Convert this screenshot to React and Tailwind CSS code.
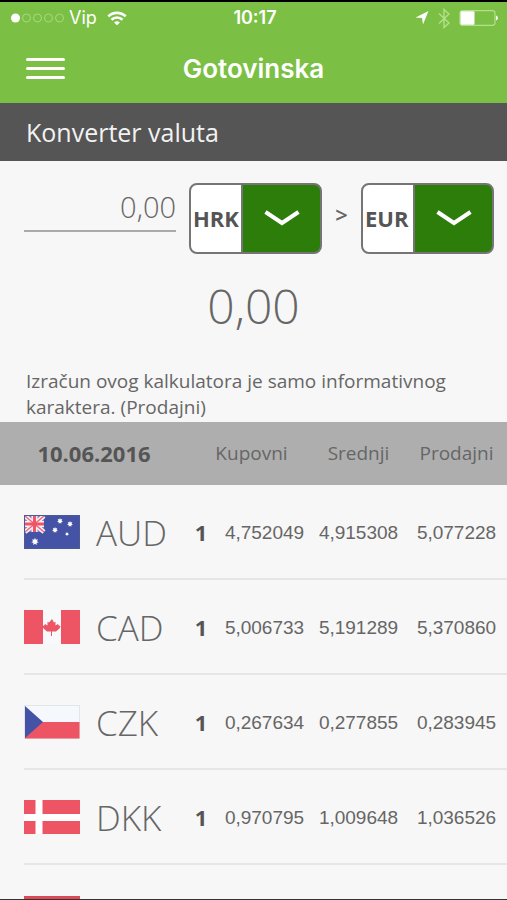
import { useState } from "react";

const rates = [
  { code: "AUD", unit: "1", buy: "4,752049", mid: "4,915308", sell: "5,077228" },
  { code: "CAD", unit: "1", buy: "5,006733", mid: "5,191289", sell: "5,370860" },
  { code: "CZK", unit: "1", buy: "0,267634", mid: "0,277855", sell: "0,283945" },
  { code: "DKK", unit: "1", buy: "0,970795", mid: "1,009648", sell: "1,036526" },
];

const star =
  "M0-3 .7-1.4 2.3-1.9 1.6-.3 3 .7 1.3 1 1.3 2.7 0 1.7-1.3 2.7-1.3 1-3 .7-1.6-.3-2.3-1.9-.7-1.4Z";

function Flag({ code }) {
  return (
    <svg className="h-[34px] w-14 shrink-0" viewBox="0 0 56 34" aria-hidden="true">
      {code === "AUD" && (
        <g>
          <rect width="56" height="34" fill="#4453a6" />
          <rect x="1" y="1" width="19" height="16" fill="#7d84c0" />
          <path d="M1 1 20 17M20 1 1 17" stroke="#f8eef4" strokeWidth="4.5" />
          <path d="M10.5 1v16M1 9h19" stroke="#f8eef4" strokeWidth="6" />
          <path d="M1 1 20 17M20 1 1 17" stroke="#ee6b79" strokeWidth="1.6" />
          <path d="M10.5 1v16M1 9h19" stroke="#ee5566" strokeWidth="3" />
          <g fill="#fff">
            <path d={star} transform="translate(11 26.5) scale(1.25)" />
            <path d={star} transform="translate(36 6)" />
            <path d={star} transform="translate(46 9)" />
            <path d={star} transform="translate(31 15)" />
            <path d={star} transform="translate(43 19) scale(.65)" />
          </g>
          <rect x=".5" y=".5" width="55" height="33" fill="none" stroke="#4e5a92" />
        </g>
      )}
      {code === "CAD" && (
        <g>
          <rect width="56" height="34" fill="#f8f9fb" />
          <path d="M0 0h19v34H0ZM37 0h19v34H37Z" fill="#ed5565" />
          <path
            d="M28 9l2 3.5 1.500-.8v3.800l2.500-1.500.8 1.500 1.700.5-1 2.500-3.500 3-4-.1V26h-1v-4.600l-4 .1-3.500-3-1-2.500 1.700-.5.8-1.500 2.500 1.500v-3.800l1.500.8Z"
            fill="#ed5565"
          />
        </g>
      )}
      {code === "CZK" && (
        <g>
          <rect x=".5" y=".5" width="55" height="33" fill="#f5f8fd" stroke="#e3e5e8" />
          <path d="M1 17h54.5v16.5H1Z" fill="#ed5565" />
          <path d="M1 1 19 17 1 33Z" fill="#4453a6" />
        </g>
      )}
      {code === "DKK" && (
        <g>
          <rect width="56" height="34" fill="#ed5565" />
          <path d="M15 0v34M0 17.5h56" stroke="#fff" strokeWidth="7" />
        </g>
      )}
      {code === "HUF" && (
        <g>
          <rect width="56" height="34" fill="#f8f9fb" />
          <path d="M0 0h56v11H0Z" fill="#dc4a58" />
          <path d="M0 23h56v11H0Z" fill="#5a9e5a" />
        </g>
      )}
    </svg>
  );
}

function StatusBar() {
  return (
    <div className="grid grid-cols-3 items-center pr-2 pl-[11px] font-['Inter',sans-serif] text-[18px] leading-8">
      <div className="flex items-center">
        <svg className="h-[10px] w-[54px]" viewBox="0 0 54 10" aria-hidden="true">
          <circle cx="4.5" cy="5" r="4.5" fill="#fff" />
          <g fill="none" stroke="#a9d982" strokeWidth="1">
            <circle cx="15.5" cy="5" r="4" />
            <circle cx="26.5" cy="5" r="4" />
            <circle cx="37.5" cy="5" r="4" />
            <circle cx="48.5" cy="5" r="4" />
          </g>
        </svg>
        <span className="ml-1">Vip</span>
        <svg className="ml-[10px] h-[15px] w-5" viewBox="0 0 20 15" fill="none" stroke="#fff" strokeWidth="2.6" aria-hidden="true">
          <path d="M1.3 5.4a12.4 12.4 0 0 1 17.4 0" />
          <path d="M4.5 8.8a7.9 7.9 0 0 1 11 0" />
          <path d="M10 14.300 7 11.600a4.300 4.300 0 0 1 6 0Z" fill="#fff" stroke="none" />
        </svg>
      </div>
      <div className="text-center font-semibold">10:17</div>
      <div className="flex items-center justify-end">
        <svg className="h-[14px] w-[14px]" viewBox="0 0 14 14" aria-hidden="true">
          <path d="M13.500 0 8 13.500 7 7 .5 6.400Z" fill="#fff" />
        </svg>
        <svg className="ml-[9px] h-[21px] w-3" viewBox="0 0 12 21" fill="none" stroke="#b5e08a" strokeWidth="1.4" aria-hidden="true">
          <path d="M1 5.500 11 15l-5 4.500v-18L11 6 1 15.500" />
        </svg>
        <svg className="ml-[9px] h-4 w-10" viewBox="0 0 40 16" aria-hidden="true">
          <rect x="1" y=".7" width="35" height="14.6" rx="2.5" fill="none" stroke="#b5e08a" strokeWidth="1.2" />
          <rect x="1.5" y="1.2" width="14" height="13.6" rx="1" fill="#fff" />
          <path d="M37 5.500c2.500.8 2.500 4.200 0 5Z" fill="#fff" />
        </svg>
      </div>
    </div>
  );
}

function CurrencySelect({ label, value, onChange }) {
  return (
    <div className="relative">
      <select
        aria-label={label}
        value={value}
        onChange={(e) => onChange(e.target.value)}
        className="block h-[71px] w-[133px] appearance-none rounded-lg border-2 border-[#757575] bg-[linear-gradient(to_right,#fff_50px,#757575_50px,#757575_52px,#2d7d0a_52px)] pl-[2px] text-[22px] font-bold text-[#555]"
      >
        <option>HRK</option>
        <option>EUR</option>
      </select>
      <svg
        className="pointer-events-none absolute top-[27px] right-[22px] h-4 w-9"
        viewBox="0 0 36 16"
        fill="none"
        stroke="#fff"
        strokeWidth="4"
        aria-hidden="true"
      >
        <path d="M1.5 2 18 13 34.5 2" />
      </svg>
    </div>
  );
}

export default function App() {
  const [amount, setAmount] = useState("0,00");
  const [from, setFrom] = useState("HRK");
  const [to, setTo] = useState("EUR");

  return (
    <div className="flex h-screen flex-col overflow-hidden border-b border-[#333] bg-[#f7f7f7] font-['Open_Sans',sans-serif] text-[#666]">
      <header className="shrink-0 border-t-2 border-black bg-[#7bbf45] text-white">
        <StatusBar />
        <div className="grid h-[69px] grid-cols-[1fr_auto_1fr] items-center px-[26px]">
          <button type="button" aria-label="Izbornik" className="flex w-10 flex-col gap-[6px]">
            <span className="h-[3px] w-[39px] rounded-full bg-white" />
            <span className="h-[3px] w-[39px] rounded-full bg-white" />
            <span className="h-[3px] w-[39px] rounded-full bg-white" />
          </button>
          <h1 className="font-['Inter',sans-serif] text-[26px] leading-8 font-semibold">Gotovinska</h1>
        </div>
      </header>

      <h2 className="shrink-0 bg-[#555] pl-[26px] text-[25px] leading-[58px] text-[#f2f2f2]">Konverter valuta</h2>

      <main className="min-h-0 flex-1 overflow-hidden">
        <form className="pt-[22px]">
          <div className="flex pr-[13px] pl-6">
            <input
              type="text"
              aria-label="Iznos"
              value={amount}
              onChange={(e) => setAmount(e.target.value)}
              className="mr-[13px] h-[49px] min-w-0 flex-1 border-b-2 border-[#aaa] text-right text-[29px] font-light outline-none"
            />
            <CurrencySelect label="Iz valute" value={from} onChange={setFrom} />
            <span className="w-[39px] text-center text-[22px] leading-[62px] font-semibold">&gt;</span>
            <CurrencySelect label="U valutu" value={to} onChange={setTo} />
          </div>
          <output className="block pt-5 text-center text-[48px] leading-[64px] font-light">0,00</output>
        </form>
        <p className="px-[26px] pt-[30px] pb-[2px] text-[19px] leading-[26px]">
          Izračun ovog kalkulatora je samo informativnog karaktera. (Prodajni)
        </p>

        <table className="w-full table-fixed border-separate border-spacing-0">
          <colgroup>
            <col className="w-6" />
            <col />
            <col className="w-[34px]" />
            <col className="w-[93px]" />
            <col className="w-[95px]" />
            <col className="w-[101px]" />
          </colgroup>
          <thead className="bg-[#aeaeae]">
            <tr className="h-[63px] text-[19px]">
              <th colSpan={2} className="pl-1 text-[22px] font-bold text-[#555]">10.06.2016</th>
              <th colSpan={2} className="pl-2 font-normal">Kupovni</th>
              <th className="font-normal">Srednji</th>
              <th className="font-normal">Prodajni</th>
            </tr>
          </thead>
          <tbody>
            {rates.map((r) => (
              <tr
                key={r.code}
                className="h-[95px] text-center font-['Liberation_Sans',Arial,sans-serif] text-[19px] [&>*+*]:border-b-2 [&>*+*]:border-[#e6e6e6]"
              >
                <td />
                <th scope="row" className="font-['Open_Sans',sans-serif] text-[35px] font-light">
                  <div className="flex items-center gap-4">
                    <Flag code={r.code} />
                    <span className="pt-1">{r.code}</span>
                  </div>
                </th>
                <td className="pt-[2px] font-['Open_Sans',sans-serif] text-[22px] font-bold text-[#555]">{r.unit}</td>
                <td className="pt-1">{r.buy}</td>
                <td className="pt-1">{r.mid}</td>
                <td className="pt-1">{r.sell}</td>
              </tr>
            ))}
            <tr className="h-[95px]">
              <td />
              <th scope="row" aria-label="HUF">
                <Flag code="HUF" />
              </th>
              <td colSpan={4} />
            </tr>
          </tbody>
        </table>
      </main>
    </div>
  );
}
